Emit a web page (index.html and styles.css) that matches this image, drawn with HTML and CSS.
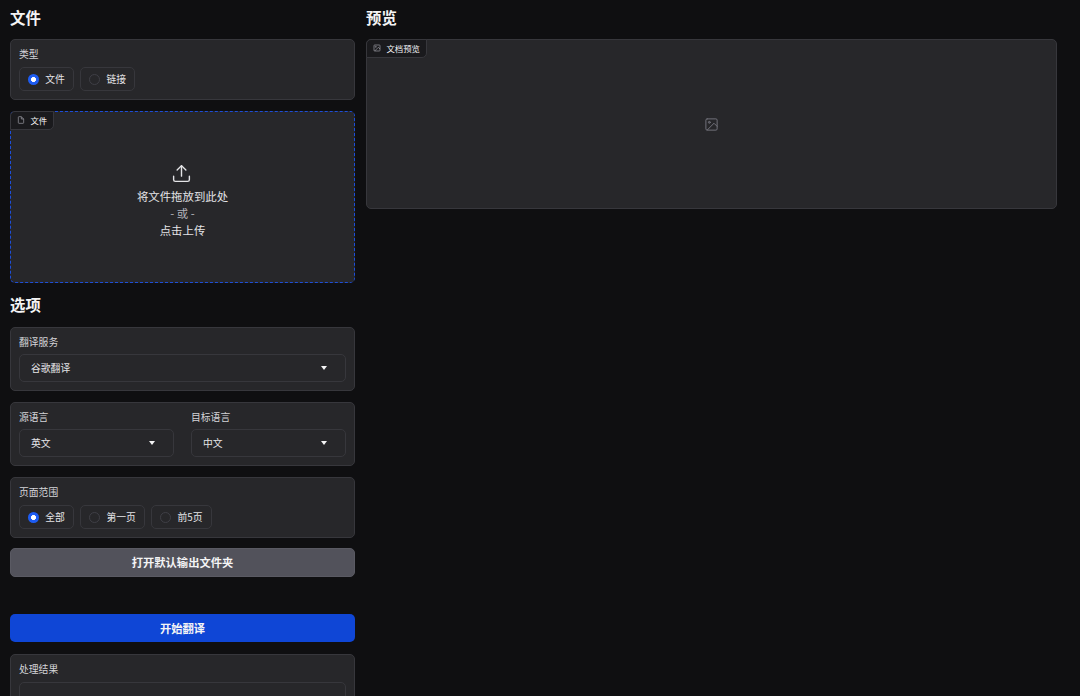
FILE: index.html
```html
<!DOCTYPE html>
<html lang="zh">
<head>
<meta charset="utf-8">
<title>文档翻译</title>
<link rel="stylesheet" href="styles.css">
</head>
<body>
<div class="app">
  <main class="left">
    <h2 class="heading">文件</h2>
    <section class="panel">
      <div class="label">类型</div>
      <div class="radios">
        <div class="radio on"><span class="dot"></span>文件</div>
        <div class="radio"><span class="dot"></span>链接</div>
      </div>
    </section>
    <section class="drop">
      <div class="tab">
        <svg class="tab-icon" viewBox="0 0 24 24" fill="none" stroke="currentColor" stroke-width="2"><path d="M13 2H6a2 2 0 0 0-2 2v16a2 2 0 0 0 2 2h12a2 2 0 0 0 2-2V9z"/><path d="M13 2v7h7"/></svg>
        文件
      </div>
      <svg class="upload" viewBox="0 0 24 24" fill="none" stroke="currentColor" stroke-width="1.6" stroke-linecap="round" stroke-linejoin="round"><path d="M3 15v4a2 2 0 0 0 2 2h14a2 2 0 0 0 2-2v-4"/><path d="M17 8l-5-5-5 5"/><path d="M12 3v12"/></svg>
      <div class="drop-text">将文件拖放到此处</div>
      <div class="drop-text dim">- 或 -</div>
      <div class="drop-text">点击上传</div>
    </section>
    <h2 class="heading options">选项</h2>
    <section class="panel">
      <div class="label">翻译服务</div>
      <div class="select"><span>谷歌翻译</span><i class="caret"></i></div>
    </section>
    <section class="panel pair">
      <div class="field">
        <div class="label">源语言</div>
        <div class="select"><span>英文</span><i class="caret"></i></div>
      </div>
      <div class="field">
        <div class="label">目标语言</div>
        <div class="select"><span>中文</span><i class="caret"></i></div>
      </div>
    </section>
    <section class="panel">
      <div class="label">页面范围</div>
      <div class="radios">
        <div class="radio on"><span class="dot"></span>全部</div>
        <div class="radio"><span class="dot"></span>第一页</div>
        <div class="radio"><span class="dot"></span>前5页</div>
      </div>
    </section>
    <button class="btn secondary">打开默认输出文件夹</button>
    <button class="btn primary">开始翻译</button>
    <section class="panel result">
      <div class="label">处理结果</div>
      <div class="textbox"></div>
    </section>
  </main>
  <aside class="right">
    <h2 class="heading">预览</h2>
    <section class="preview">
      <div class="tab">
        <svg class="tab-icon" viewBox="0 0 24 24" fill="none" stroke="currentColor" stroke-width="2"><rect x="3" y="3" width="18" height="18" rx="2"/><circle cx="8.5" cy="8.5" r="1.5"/><path d="M21 15l-5-5L5 21"/></svg>
        文档预览
      </div>
      <svg class="pic" viewBox="0 0 24 24" fill="none" stroke="currentColor" stroke-width="1.6" stroke-linecap="round" stroke-linejoin="round"><rect x="3" y="3" width="18" height="18" rx="2"/><circle cx="8.5" cy="8.5" r="1.5"/><path d="M21 15l-5-5L5 21"/></svg>
    </section>
  </aside>
</div>
</body>
</html>
```
FILE: styles.css
```css
* { box-sizing: border-box; }
html, body {
  margin: 0;
  height: 100%;
  overflow: hidden;
  background: #0f0f11;
}
body {
  color: #f4f4f5;
  font-family: "Noto Sans CJK SC", Inter, "Noto Sans", sans-serif;
  font-size: 9.8px;
}
.app {
  display: flex;
  gap: 11px;
  padding: 0 23px 0 10px;
  align-items: flex-start;
}
.left {
  flex: 0 0 345px;
  display: flex;
  flex-direction: column;
}
.right {
  flex: 0 0 691px;
  display: flex;
  flex-direction: column;
}
.heading {
  margin: 0;
  height: 39px;
  padding-top: 6px;
  font-size: 15.4px;
  line-height: 22px;
  font-weight: 600;
  color: #f4f4f5;
}
.heading.options {
  height: 44px;
  padding-top: 10px;
}
.panel {
  background: #27272a;
  border: 1px solid #37373c;
  border-radius: 5px;
  padding: 6.5px 8px 7.5px;
  margin-bottom: 11.5px;
}
.label {
  height: 14px;
  line-height: 14px;
  color: #d4d4d8;
  margin-bottom: 6.5px;
}
.radios {
  display: flex;
  gap: 6px;
}
.radio {
  display: flex;
  align-items: center;
  gap: 6px;
  height: 24px;
  padding: 0 8.3px;
  border: 1px solid #37373c;
  border-radius: 5px;
  color: #e4e4e7;
}
.dot {
  width: 11px;
  height: 11px;
  border-radius: 50%;
  border: 1px solid #3f3f46;
  background: #27272a;
}
.radio.on .dot {
  border: 0;
  background: radial-gradient(circle, #fff 0 2.2px, #1d5cf2 2.7px);
}
.drop {
  position: relative;
  height: 172px;
  background: #27272a;
  border: 1px dashed #1d4ed8;
  border-radius: 5px;
  display: flex;
  flex-direction: column;
  align-items: center;
  padding-top: 51px;
  color: #e4e4e7;
}
.tab {
  position: absolute;
  top: -1px;
  left: -1px;
  display: flex;
  align-items: center;
  gap: 5.5px;
  height: 19px;
  padding: 0 5.5px 1.5px 6px;
  font-size: 8.4px;
  color: #f4f4f5;
  background: #1a1a1d;
  border: 1px solid #37373c;
  border-radius: 5px 0 5px 0;
}
.tab-icon {
  width: 8px;
  height: 8px;
  margin-top: 1px;
  color: #a1a1aa;
}
.upload {
  width: 21px;
  height: 21px;
  margin: 0 3px 4px 0;
  color: #e4e4e7;
}
.drop-text {
  height: 17px;
  line-height: 17px;
  font-size: 11.4px;
}
.drop-text.dim {
  color: #b4b4bb;
}
.select {
  display: flex;
  align-items: center;
  justify-content: space-between;
  height: 28px;
  padding: 0 18px 0 11px;
  border: 1px solid #37373c;
  border-radius: 5px;
  color: #e4e4e7;
}
.panel .label:has(+ .select) {
  margin-bottom: 5.5px;
}
.caret {
  width: 0;
  height: 0;
  border-left: 3.5px solid transparent;
  border-right: 3.5px solid transparent;
  border-top: 4px solid #f4f4f5;
}
.pair {
  display: flex;
  gap: 17px;
}
.field {
  flex: 1;
}
.btn {
  display: block;
  width: 100%;
  height: 28.5px;
  border: 0;
  border-radius: 5px;
  font-family: inherit;
  font-size: 11.3px;
  font-weight: 600;
  color: #f4f4f5;
}
.secondary {
  background: #52525b;
  border: 1px solid #5a5a63;
  margin-top: -1px;
  margin-bottom: 37.5px;
}
.primary {
  height: 28px;
  background: #0f46d6;
  margin-bottom: 12px;
}
.result {
  height: 60px;
  margin-bottom: 0;
}
.textbox {
  height: 40px;
  border: 1px solid #37373c;
  border-radius: 5px;
}
.preview {
  position: relative;
  height: 169.5px;
  padding-top: 1px;
  background: #27272a;
  border: 1px solid #37373c;
  border-radius: 5px;
  display: flex;
  align-items: center;
  justify-content: center;
}
.pic {
  width: 15px;
  height: 15px;
  color: #71717a;
}
```
